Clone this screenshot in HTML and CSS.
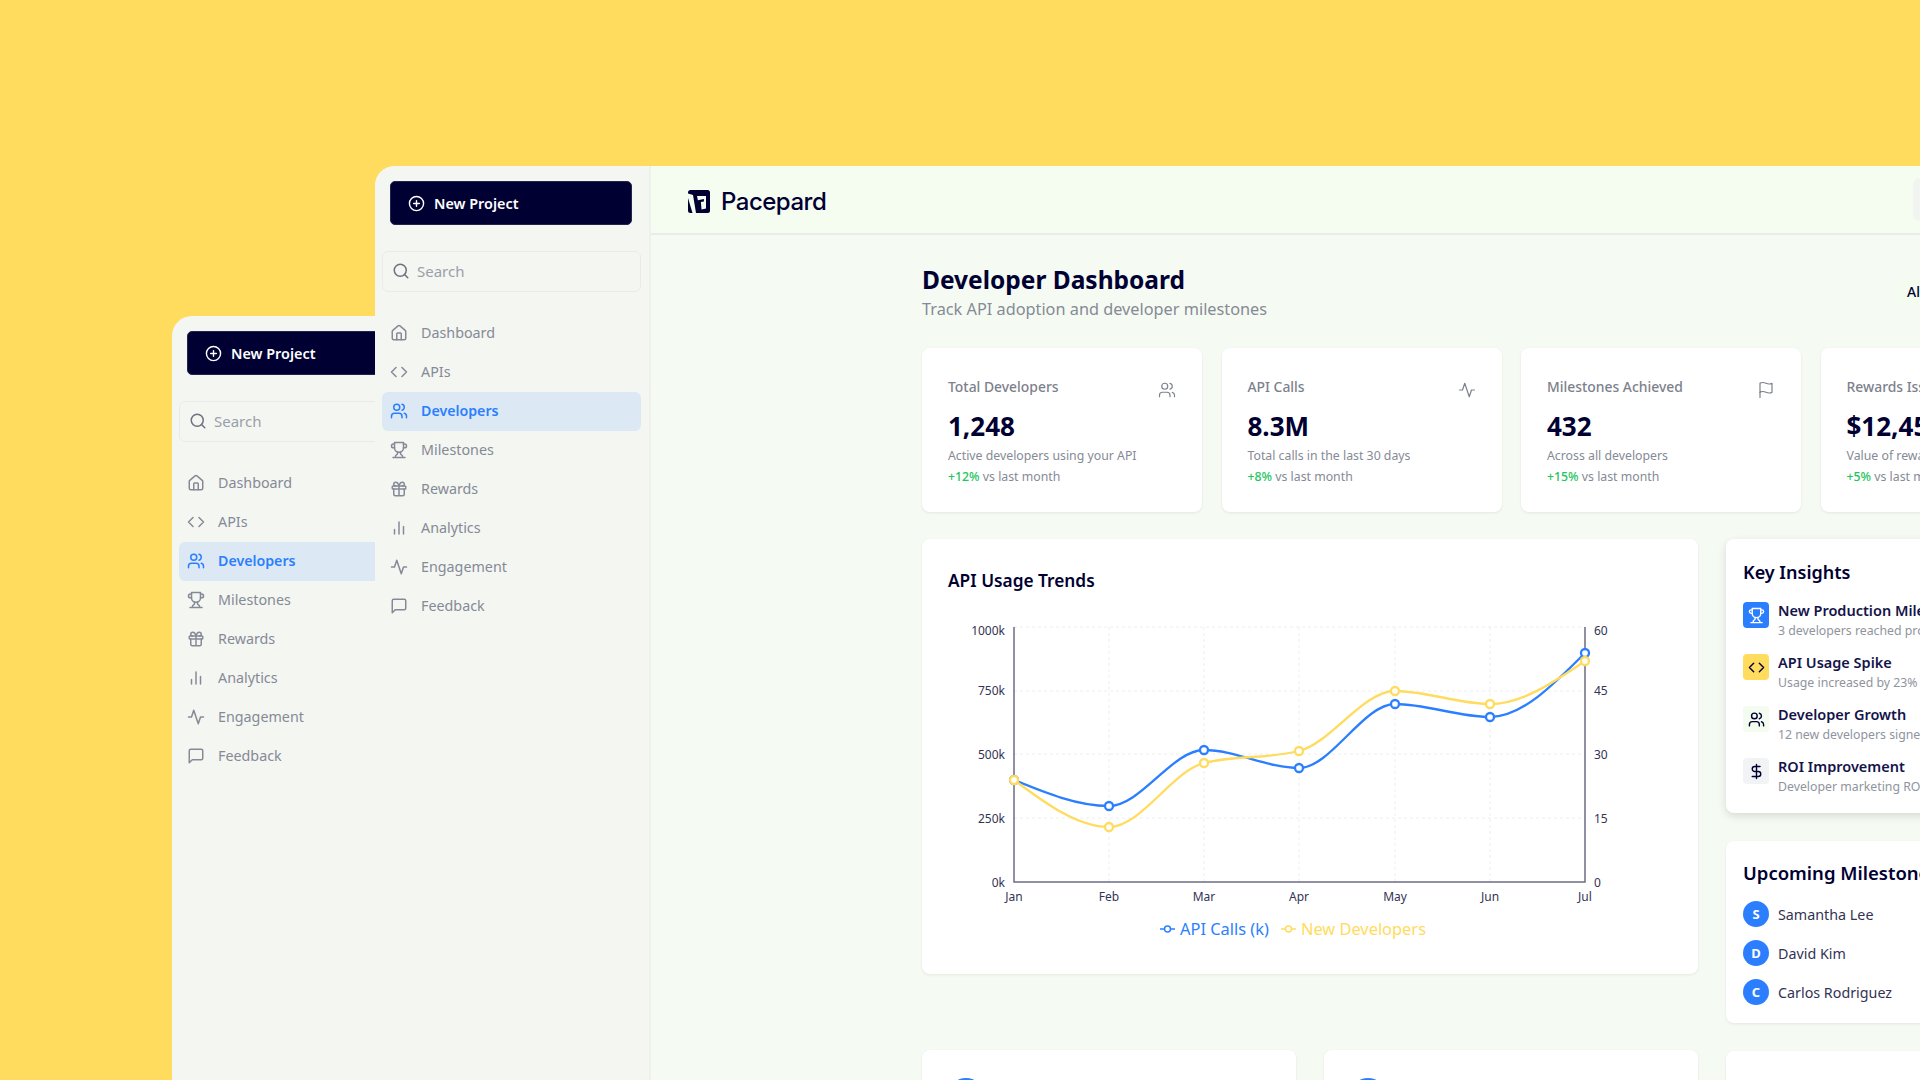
FILE: index.html
```html
<!DOCTYPE html>
<html lang="en">
<head>
  <meta charset="UTF-8">
  <title>Pacepard - Developer Dashboard</title>
  <link rel="stylesheet" href="styles.css">
</head>
<body>
  <!-- icon sprite -->
  <svg class="sprite" xmlns="http://www.w3.org/2000/svg">
    <symbol id="i-plus" viewBox="0 0 24 24"><circle cx="12" cy="12" r="10"/><path d="M8 12h8M12 8v8"/></symbol>
    <symbol id="i-search" viewBox="0 0 24 24"><circle cx="11" cy="11" r="8"/><path d="m21 21-4.3-4.3"/></symbol>
    <symbol id="i-home" viewBox="0 0 24 24"><path d="M15 21v-8a1 1 0 0 0-1-1h-4a1 1 0 0 0-1 1v8"/><path d="M3 10a2 2 0 0 1 .709-1.528l7-5.999a2 2 0 0 1 2.582 0l7 5.999A2 2 0 0 1 21 10v9a2 2 0 0 1-2 2H5a2 2 0 0 1-2-2z"/></symbol>
    <symbol id="i-code" viewBox="0 0 24 24"><path d="m16 18 6-6-6-6M8 6l-6 6 6 6"/></symbol>
    <symbol id="i-users" viewBox="0 0 24 24"><path d="M16 21v-2a4 4 0 0 0-4-4H6a4 4 0 0 0-4 4v2"/><circle cx="9" cy="7" r="4"/><path d="M22 21v-2a4 4 0 0 0-3-3.87M16 3.13a4 4 0 0 1 0 7.75"/></symbol>
    <symbol id="i-trophy" viewBox="0 0 24 24"><path d="M6 9H4.5a2.5 2.5 0 0 1 0-5H6M18 9h1.5a2.5 2.5 0 0 0 0-5H18M4 22h16M10 14.66V17c0 .55-.47.98-.97 1.21C7.85 18.75 7 20.24 7 22M14 14.66V17c0 .55.47.98.97 1.21C16.15 18.75 17 20.24 17 22"/><path d="M18 2H6v7a6 6 0 0 0 12 0V2Z"/></symbol>
    <symbol id="i-gift" viewBox="0 0 24 24"><rect x="3" y="8" width="18" height="4" rx="1"/><path d="M12 8v13M19 12v7a2 2 0 0 1-2 2H7a2 2 0 0 1-2-2v-7"/><path d="M7.5 8a2.5 2.5 0 0 1 0-5A4.8 8 0 0 1 12 8a4.8 8 0 0 1 4.5-5 2.5 2.5 0 0 1 0 5"/></symbol>
    <symbol id="i-bars" viewBox="0 0 24 24"><path d="M18 20V10M12 20V4M6 20v-6"/></symbol>
    <symbol id="i-activity" viewBox="0 0 24 24"><path d="M22 12h-4l-3 9L9 3l-3 9H2"/></symbol>
    <symbol id="i-message" viewBox="0 0 24 24"><path d="M21 15a2 2 0 0 1-2 2H7l-4 4V5a2 2 0 0 1 2-2h14a2 2 0 0 1 2 2z"/></symbol>
    <symbol id="i-flag" viewBox="0 0 24 24"><path d="M4 15s1-1 4-1 5 2 8 2 4-1 4-1V3s-1 1-4 1-5-2-8-2-4 1-4 1z"/><path d="M4 22v-7"/></symbol>
    <symbol id="i-dollar" viewBox="0 0 24 24"><path d="M12 2v20M17 5H9.5a3.5 3.5 0 0 0 0 7h5a3.5 3.5 0 0 1 0 7H6"/></symbol>
  </svg>

  <!-- window behind -->
  <div class="window window-back">
    <aside class="sidebar">
      <button class="new-project"><svg class="icon"><use href="#i-plus"/></svg>New Project</button>
      <div class="search"><svg class="icon"><use href="#i-search"/></svg>Search</div>
      <nav class="nav">
        <a class="nav-item"><svg class="icon"><use href="#i-home"/></svg>Dashboard</a>
        <a class="nav-item"><svg class="icon"><use href="#i-code"/></svg>APIs</a>
        <a class="nav-item active"><svg class="icon"><use href="#i-users"/></svg>Developers</a>
        <a class="nav-item"><svg class="icon"><use href="#i-trophy"/></svg>Milestones</a>
        <a class="nav-item"><svg class="icon"><use href="#i-gift"/></svg>Rewards</a>
        <a class="nav-item"><svg class="icon"><use href="#i-bars"/></svg>Analytics</a>
        <a class="nav-item"><svg class="icon"><use href="#i-activity"/></svg>Engagement</a>
        <a class="nav-item"><svg class="icon"><use href="#i-message"/></svg>Feedback</a>
      </nav>
    </aside>
  </div>

  <!-- window in front -->
  <div class="window window-front">
    <aside class="sidebar">
      <button class="new-project"><svg class="icon"><use href="#i-plus"/></svg>New Project</button>
      <div class="search"><svg class="icon"><use href="#i-search"/></svg>Search</div>
      <nav class="nav">
        <a class="nav-item"><svg class="icon"><use href="#i-home"/></svg>Dashboard</a>
        <a class="nav-item"><svg class="icon"><use href="#i-code"/></svg>APIs</a>
        <a class="nav-item active"><svg class="icon"><use href="#i-users"/></svg>Developers</a>
        <a class="nav-item"><svg class="icon"><use href="#i-trophy"/></svg>Milestones</a>
        <a class="nav-item"><svg class="icon"><use href="#i-gift"/></svg>Rewards</a>
        <a class="nav-item"><svg class="icon"><use href="#i-bars"/></svg>Analytics</a>
        <a class="nav-item"><svg class="icon"><use href="#i-activity"/></svg>Engagement</a>
        <a class="nav-item"><svg class="icon"><use href="#i-message"/></svg>Feedback</a>
      </nav>
    </aside>

    <main class="main">
      <header class="topbar">
        <div class="brand">
          <svg class="brand-mark" viewBox="0 0 22 23">
            <rect width="22" height="23" rx="2.5" fill="#000033"/>
            <path d="M0 3.5 5 5l3 18H4.5L0 8z" fill="#f5fdf1"/>
            <path d="M9 6h9v12.5l-4.5 1-.6-7.5 3-.6V9l-6 1.2z" fill="#f5fdf1"/>
          </svg>
          <span class="brand-name">Pacepard</span>
        </div>
        <div class="topbar-btn"></div>
      </header>

      <section class="content">
        <div class="page-head">
          <div>
            <h1>Developer Dashboard</h1>
            <p class="subtitle">Track API adoption and developer milestones</p>
          </div>
          <div class="range-chip">All Time</div>
        </div>

        <div class="stats">
          <div class="card stat">
            <div class="stat-head"><span class="stat-label">Total Developers</span><svg class="icon"><use href="#i-users"/></svg></div>
            <div class="stat-value">1,248</div>
            <div class="stat-note">Active developers using your API</div>
            <div class="stat-note"><b>+12%</b> vs last month</div>
          </div>
          <div class="card stat">
            <div class="stat-head"><span class="stat-label">API Calls</span><svg class="icon"><use href="#i-activity"/></svg></div>
            <div class="stat-value">8.3M</div>
            <div class="stat-note">Total calls in the last 30 days</div>
            <div class="stat-note"><b>+8%</b> vs last month</div>
          </div>
          <div class="card stat">
            <div class="stat-head"><span class="stat-label">Milestones Achieved</span><svg class="icon"><use href="#i-flag"/></svg></div>
            <div class="stat-value">432</div>
            <div class="stat-note">Across all developers</div>
            <div class="stat-note"><b>+15%</b> vs last month</div>
          </div>
          <div class="card stat">
            <div class="stat-head"><span class="stat-label">Rewards Issued</span><svg class="icon"><use href="#i-gift"/></svg></div>
            <div class="stat-value">$12,450</div>
            <div class="stat-note">Value of rewards distributed</div>
            <div class="stat-note"><b>+5%</b> vs last month</div>
          </div>
        </div>

        <div class="columns">
          <div class="col-left">
            <div class="card chart-card">
              <h2>API Usage Trends</h2>
              <svg class="chart" viewBox="948 620 690 285">
                <g class="grid">
                  <path d="M1014 627H1585M1014 691H1585M1014 754H1585M1014 818H1585"/>
                  <path d="M1109 627V882M1204 627V882M1299 627V882M1395 627V882M1490 627V882"/>
                </g>
                <path class="axis" d="M1014 627V882H1585V627"/>
                <g class="tick tick-left">
                  <text x="1005" y="635">1000k</text>
                  <text x="1005" y="695">750k</text>
                  <text x="1005" y="759">500k</text>
                  <text x="1005" y="823">250k</text>
                  <text x="1005" y="887">0k</text>
                </g>
                <g class="tick tick-right">
                  <text x="1594" y="635">60</text>
                  <text x="1594" y="695">45</text>
                  <text x="1594" y="759">30</text>
                  <text x="1594" y="823">15</text>
                  <text x="1594" y="887">0</text>
                </g>
                <g class="tick tick-bottom">
                  <text x="1014" y="901">Jan</text>
                  <text x="1109" y="901">Feb</text>
                  <text x="1204" y="901">Mar</text>
                  <text x="1299" y="901">Apr</text>
                  <text x="1395" y="901">May</text>
                  <text x="1490" y="901">Jun</text>
                  <text x="1585" y="901">Jul</text>
                </g>
                <g class="series series-blue">
                  <path d="M1014 780C1045.7 793 1077.4 806 1109 806C1140.9 806 1172.3 750 1204 750C1235.9 750 1267.3 768 1299 768C1330.7 768 1363.3 704 1395 704C1426.7 704 1458.3 717 1490 717C1521.7 717 1553.3 685 1585 653"/>
                  <circle cx="1014" cy="780" r="4"/><circle cx="1109" cy="806" r="4"/><circle cx="1204" cy="750" r="4"/><circle cx="1299" cy="768" r="4"/><circle cx="1395" cy="704" r="4"/><circle cx="1490" cy="717" r="4"/><circle cx="1585" cy="653" r="4"/>
                </g>
                <g class="series series-yellow">
                  <path d="M1014 780C1045.7 803.5 1077.4 827 1109 827C1140.9 827 1172.3 771 1204 763C1235.9 755 1267.3 759 1299 751C1330.7 743 1363.3 691 1395 691C1426.7 691 1458.3 704 1490 704C1521.7 704 1553.3 682.5 1585 661"/>
                  <circle cx="1014" cy="780" r="4"/><circle cx="1109" cy="827" r="4"/><circle cx="1204" cy="763" r="4"/><circle cx="1299" cy="751" r="4"/><circle cx="1395" cy="691" r="4"/><circle cx="1490" cy="704" r="4"/><circle cx="1585" cy="661" r="4"/>
                </g>
              </svg>
              <div class="legend">
                <span class="legend-item legend-blue"><svg class="legend-icon" viewBox="0 0 15 10"><path d="M0 5H15"/><circle cx="7.5" cy="5" r="3"/></svg>API Calls (k)</span>
                <span class="legend-item legend-yellow"><svg class="legend-icon" viewBox="0 0 15 10"><path d="M0 5H15"/><circle cx="7.5" cy="5" r="3"/></svg>New Developers</span>
              </div>
            </div>

            <div class="bottom-row">
              <div class="card bottom-card"><div class="bottom-dot"></div></div>
              <div class="card bottom-card"><div class="bottom-dot"></div></div>
            </div>
          </div>

          <div class="col-right">
            <div class="card side-card insights">
              <h2>Key Insights</h2>
              <div class="insight">
                <div class="tile tile-blue"><svg class="icon"><use href="#i-trophy"/></svg></div>
                <div><div class="insight-title">New Production Milestone</div><div class="insight-sub">3 developers reached production this week</div></div>
              </div>
              <div class="insight">
                <div class="tile tile-yellow"><svg class="icon"><use href="#i-code"/></svg></div>
                <div><div class="insight-title">API Usage Spike</div><div class="insight-sub">Usage increased by 23% this month</div></div>
              </div>
              <div class="insight">
                <div class="tile tile-green"><svg class="icon"><use href="#i-users"/></svg></div>
                <div><div class="insight-title">Developer Growth</div><div class="insight-sub">12 new developers signed up this week</div></div>
              </div>
              <div class="insight">
                <div class="tile tile-gray"><svg class="icon"><use href="#i-dollar"/></svg></div>
                <div><div class="insight-title">ROI Improvement</div><div class="insight-sub">Developer marketing ROI increased</div></div>
              </div>
            </div>

            <div class="card side-card upcoming">
              <h2>Upcoming Milestones</h2>
              <div class="person"><span class="avatar">S</span>Samantha Lee</div>
              <div class="person"><span class="avatar">D</span>David Kim</div>
              <div class="person"><span class="avatar">C</span>Carlos Rodriguez</div>
            </div>

            <div class="card side-card side-empty"></div>
          </div>
        </div>
      </section>
    </main>
  </div>
</body>
</html>
```

FILE: styles.css
```css
* {
  box-sizing: border-box;
}

html, body {
  height: 100%;
}

body {
  margin: 0;
  background-color: #ffdb5e;
  color: #000033;
  font-family: 'Noto Sans', 'Open Sans', sans-serif;
  overflow: hidden;
}

.sprite {
  position: absolute;
  width: 0;
  height: 0;
}

.icon {
  width: 16px;
  height: 16px;
  flex: none;
  fill: none;
  stroke: currentColor;
  stroke-width: 2;
  stroke-linecap: round;
  stroke-linejoin: round;
}

/* windows sit on a free canvas */
.window {
  position: absolute;
  display: flex;
  overflow: hidden;
  background-color: #f4f6f2;
  border-radius: 20px 0 0 0;
}

.window-back {
  left: 172px;
  top: 316px;
  width: 275px;
  height: 764px;
}

.window-front {
  left: 375px;
  top: 166px;
  width: 1725px;
  height: 914px;
}

/* sidebar */
.sidebar {
  width: 276px;
  flex: none;
  padding: 15px 8px 0 7px;
  background-color: #f4f6f2;
  border-right: 2px solid #eef0ec;
}

.new-project {
  display: flex;
  align-items: center;
  gap: 9px;
  width: 242px;
  height: 44px;
  margin: 0 0 26px 8px;
  padding: 0 0 0 17px;
  background-color: #000033;
  color: #fff;
  border: 1px solid #23234f;
  border-radius: 5px;
  font-family: inherit;
  font-size: 14.4px;
  font-weight: 600;
}

.new-project .icon {
  width: 17px;
  height: 17px;
}

.search {
  display: flex;
  align-items: center;
  gap: 7px;
  height: 41px;
  padding: 0 9px 2px;
  color: #9a9fa9;
  border: 1px solid #e8ebe7;
  border-radius: 6px;
  font-size: 15px;
  margin-bottom: 22px;
}

.search .icon {
  width: 18px;
  height: 18px;
  color: #6b7280;
}

.nav-item {
  display: flex;
  align-items: center;
  gap: 13px;
  height: 39px;
  padding: 0 0 2px 8px;
  border-radius: 6px;
  color: #858a96;
  font-size: 14.3px;
}

.nav-item .icon {
  width: 18px;
  height: 18px;
}

.nav-item.active {
  background-color: #dce8f3;
  color: #2b7fff;
  font-size: 14.2px;
  font-weight: 600;
}

/* main area */
.main {
  flex: 1;
  min-width: 0;
  background-color: #f5fbf2;
}

.topbar {
  display: flex;
  align-items: center;
  justify-content: space-between;
  height: 69px;
  padding-left: 37px;
  background-color: #f5fdf1;
  border-bottom: 2px solid #e9ede7;
}

.brand {
  display: flex;
  align-items: center;
  gap: 11px;
  margin-top: 3px;
}

.brand-mark {
  width: 22px;
  height: 23px;
}

.brand-name {
  font-family: Inter, 'Liberation Sans', sans-serif;
  font-size: 24px;
  font-weight: 500;
  letter-spacing: -0.5px;
}

.topbar-btn {
  width: 187px;
  height: 43px;
  margin-top: -1px;
  background-color: #f1f4f0;
  border-radius: 6px;
}

.content {
  padding: 29px 0 0 271px;
}

.page-head {
  display: flex;
  justify-content: space-between;
  align-items: flex-start;
  height: 84px;
}

.page-head h1 {
  margin: 0;
  font-size: 24.5px;
  line-height: 32px;
  font-weight: 700;
}

.subtitle {
  margin: 1px 0 0;
  font-size: 16.3px;
  line-height: 24px;
  color: #858a96;
}

.range-chip {
  width: 205px;
  height: 24px;
  margin-top: 16px;
  padding-left: 12px;
  border-radius: 12px 0 0 12px;
  background-color: #f3fcef;
  font-size: 14px;
  font-weight: 500;
  line-height: 24px;
}

.card {
  background-color: #fff;
  border-radius: 8px;
  box-shadow: 0 1px 3px rgba(0, 0, 0, 0.08);
}

/* stat cards */
.stats {
  display: grid;
  grid-template-columns: repeat(4, 280px);
  column-gap: 19.5px;
}

.stat {
  height: 164px;
  padding: 28px 26px 0;
}

.stat-head {
  display: flex;
  justify-content: space-between;
  color: #7c818c;
}

.stat-head .icon {
  width: 18px;
  height: 18px;
  margin-top: 5px;
  stroke-width: 1.6;
}

.stat-label {
  font-size: 13.9px;
  line-height: 22px;
  font-weight: 500;
}

.stat-value {
  margin-top: 9px;
  font-size: 26px;
  line-height: 36px;
  font-weight: 700;
}

.stat-note {
  font-size: 12.3px;
  line-height: 21px;
  color: #858a96;
}

.stat-value + .stat-note {
  margin-top: 1px;
}

.stat-note b {
  color: #22c55e;
  font-weight: 500;
}

/* lower columns */
.columns {
  display: flex;
  gap: 28px;
  margin-top: 27px;
}

.col-left {
  width: 776px;
  flex: none;
  display: flex;
  flex-direction: column;
  gap: 76px;
}

.col-right {
  flex: 1;
  display: flex;
  flex-direction: column;
  gap: 28px;
}

.card h2 {
  margin: 0;
  font-size: 18px;
  line-height: 28px;
  font-weight: 600;
}

.chart-card {
  height: 435px;
  padding: 28px 26px 0;
}

.chart-card h2 {
  font-size: 17.3px;
}

.chart {
  display: block;
  width: 690px;
  height: 285px;
  margin-top: 25px;
}

.grid path {
  fill: none;
  stroke: #eeeeee;
  stroke-dasharray: 3 3;
}

.axis {
  fill: none;
  stroke: #6c6c85;
  stroke-width: 1.5;
}

.tick {
  font-size: 12px;
  fill: #333355;
}

.tick-left {
  text-anchor: end;
}

.tick-bottom {
  text-anchor: middle;
}

.series path {
  fill: none;
  stroke-width: 2.3;
}

.series circle {
  fill: #fff;
  stroke-width: 2.3;
}

.series-blue path,
.series-blue circle {
  stroke: #2b7fff;
}

.series-yellow path,
.series-yellow circle {
  stroke: #ffdb5e;
}

.legend {
  display: flex;
  justify-content: center;
  gap: 12px;
  width: 690px;
  margin-top: 12px;
  font-size: 16.4px;
  line-height: 24px;
}

.legend-item {
  display: flex;
  align-items: center;
  gap: 5px;
}

.legend-icon {
  width: 15px;
  height: 10px;
  fill: #fff;
  stroke: currentColor;
  stroke-width: 1.5;
}

.legend-blue {
  color: #2b7fff;
}

.legend-yellow {
  color: #ffdb5e;
}

.bottom-row {
  display: grid;
  grid-template-columns: 374px 374px;
  column-gap: 28px;
}

.bottom-card {
  height: 120px;
  padding: 28px 26px;
}

.bottom-dot {
  width: 36px;
  height: 36px;
  border-radius: 50%;
  background-color: #2b7fff;
}

/* right column */
.side-card {
  padding: 18px 17px;
  white-space: nowrap;
}

.insights {
  height: 274px;
  padding-top: 19px;
  box-shadow: 0 3px 8px rgba(0, 0, 0, 0.13);
}

.insight {
  display: flex;
  gap: 9px;
  height: 40px;
  margin-top: 12px;
}

.insights h2 + .insight {
  margin-top: 15px;
}

.tile {
  display: flex;
  align-items: center;
  justify-content: center;
  width: 26px;
  height: 26px;
  margin-top: 1px;
  flex: none;
  border-radius: 4px;
}

.tile .icon {
  width: 17px;
  height: 17px;
}

.tile-blue {
  background-color: #2b7fff;
  color: #fff;
}

.tile-yellow {
  background-color: #ffdb5e;
}

.tile-green {
  background-color: #f3fcef;
}

.tile-gray {
  background-color: #f2f3f5;
}

.insight-title {
  margin: -1px 0 1px;
  font-size: 14.5px;
  line-height: 20px;
  font-weight: 600;
  color: #14144a;
}

.insight-sub {
  font-size: 12.3px;
  line-height: 20px;
  color: #8f949e;
}

.upcoming {
  height: 182px;
}

.upcoming h2 {
  font-size: 18.5px;
}

.person {
  display: flex;
  align-items: center;
  gap: 9px;
  height: 26px;
  margin-top: 13px;
  font-size: 14.3px;
  color: #333355;
}

.upcoming h2 + .person {
  margin-top: 14px;
}

.avatar {
  display: flex;
  align-items: center;
  justify-content: center;
  width: 26px;
  height: 26px;
  flex: none;
  border-radius: 50%;
  background-color: #2b7fff;
  color: #fff;
  font-size: 13px;
  font-weight: 700;
}

.side-empty {
  height: 120px;
}
```
